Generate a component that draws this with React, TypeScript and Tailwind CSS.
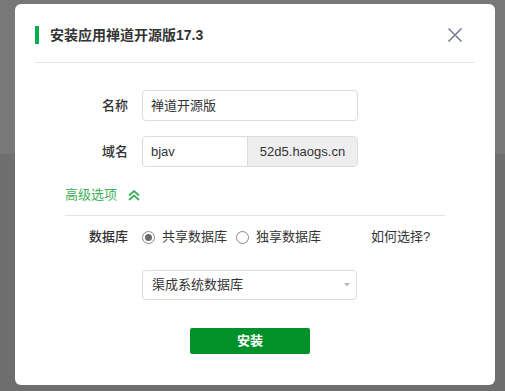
import React from "react";

const font = { fontFamily: '"Liberation Sans", "Noto Sans CJK SC", sans-serif' };

function Radio({ checked, label }: { checked?: boolean; label: string }) {
  return (
    <label className="flex items-center">
      <span className="flex h-[13px] w-[13px] items-center justify-center rounded-full border border-[#8a8a8a] bg-white">
        {checked && <span className="h-[7px] w-[7px] rounded-full bg-[#6b6b6b]" />}
      </span>
      <span className="ml-[7px] text-[13px] text-[#333]">{label}</span>
    </label>
  );
}

export default function App() {
  return (
    <div className="relative h-[391px] w-[505px] overflow-hidden bg-[#6e6e6e]" style={font}>
      <div className="h-[154px] w-full bg-[#787878]" />
      <div className="absolute left-[15px] top-[4px] flex h-[381px] w-[480px] flex-col rounded-[6px] bg-white px-5">
        {/* header */}
        <div className="flex h-[59px] items-center border-b border-[#e5e5e5] pt-[4px]">
          <span className="h-[18px] w-[4px] bg-[#00b04f]" />
          <span className="ml-[11px] text-[14px] font-bold text-[#333]">安装应用禅道开源版17.3</span>
          <button className="ml-auto mr-[12px] flex h-[16px] w-[16px] items-center justify-center">
            <svg width="16" height="16" viewBox="0 0 16 16">
              <path d="M1.5 1.5 L14.5 14.5 M14.5 1.5 L1.5 14.5" stroke="#7b8091" strokeWidth="1.6" fill="none" />
            </svg>
          </button>
        </div>

        {/* name */}
        <div className="mt-[27px] flex items-center">
          <div className="w-[93px] text-right text-[13px] font-medium text-[#333]">名称</div>
          <div className="ml-[14px] flex h-[31px] w-[216px] items-center rounded-[4px] border border-[#dcdcdc] px-2 text-[13px] text-[#333]">
            禅道开源版
          </div>
        </div>

        {/* domain */}
        <div className="mt-[15px] flex items-center">
          <div className="w-[93px] text-right text-[13px] font-medium text-[#333]">域名</div>
          <div className="ml-[14px] flex h-[31px] w-[216px] overflow-hidden rounded-[4px] border border-[#dcdcdc] text-[13px] text-[#333]">
            <div className="flex w-[104px] items-center px-2">bjav</div>
            <div className="flex flex-1 items-center justify-center border-l border-[#dcdcdc] bg-[#eeeeee]">
              52d5.haogs.cn
            </div>
          </div>
        </div>

        {/* advanced */}
        <div className="ml-[30px] mt-[18px] flex h-[20px] items-center">
          <span className="text-[13px] text-[#3fae5a]">高级选项</span>
          <svg className="ml-[11px]" width="12" height="11" viewBox="0 0 12 11">
            <path d="M1 5.5 L6 1 L11 5.5 M1 10 L6 5.5 L11 10" stroke="#3fae5a" strokeWidth="1.8" fill="none" />
          </svg>
        </div>
        <div className="ml-[30px] mt-[10px] h-px w-[380px] bg-[#e5e5e5]" />

        {/* database */}
        <div className="mt-[11px] flex h-[20px] items-center">
          <div className="w-[93px] text-right text-[13px] font-medium text-[#333]">数据库</div>
          <div className="ml-[14px] flex items-center">
            <Radio checked label="共享数据库" />
            <div className="ml-[9px]">
              <Radio label="独享数据库" />
            </div>
            <span className="ml-[50px] text-[13px] text-[#333]">如何选择?</span>
          </div>
        </div>

        {/* select */}
        <div className="ml-[107px] mt-[23px] flex h-[30px] w-[215px] items-center justify-between rounded-[4px] border border-[#dcdcdc] pl-[9px] pr-[6px] text-[13px] text-[#333]">
          <span>渠成系统数据库</span>
          <svg width="6" height="4" viewBox="0 0 6 4">
            <path d="M0 0 L6 0 L3 3.5 Z" fill="#b9b9b9" />
          </svg>
        </div>

        {/* button */}
        <div className="mt-[28px] flex justify-center pr-[10px]">
          <button className="h-[26px] w-[120px] rounded-[2px] bg-[#00912a] text-[13px] font-bold text-white">安装</button>
        </div>
      </div>
    </div>
  );
}
